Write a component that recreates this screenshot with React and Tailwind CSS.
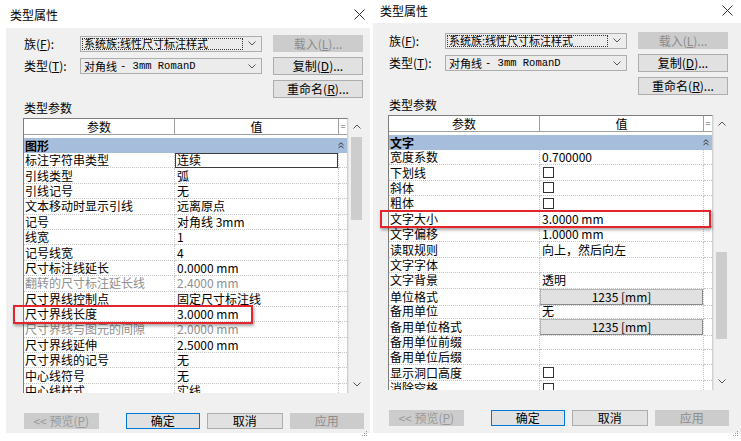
import React from 'react'
import clsx from 'clsx'

const LEFT_ROWS = [
  { name: '标注字符串类型', value: '连续', edit: true },
  { name: '引线类型', value: '弧' },
  { name: '引线记号', value: '无' },
  { name: '文本移动时显示引线', value: '远离原点' },
  { name: '记号', value: '对角线 3mm' },
  { name: '线宽', value: '1' },
  { name: '记号线宽', value: '4' },
  { name: '尺寸标注线延长', value: '0.0000 mm' },
  { name: '翻转的尺寸标注延长线', value: '2.4000 mm', muted: true },
  { name: '尺寸界线控制点', value: '固定尺寸标注线' },
  { name: '尺寸界线长度', value: '3.0000 mm' },
  { name: '尺寸界线与图元的间隙', value: '2.0000 mm', muted: true },
  { name: '尺寸界线延伸', value: '2.5000 mm' },
  { name: '尺寸界线的记号', value: '无' },
  { name: '中心线符号', value: '无' },
  { name: '中心线样式', value: '实线' },
]

const RIGHT_ROWS = [
  { name: '宽度系数', value: '0.700000' },
  { name: '下划线', check: true },
  { name: '斜体', check: true },
  { name: '粗体', check: true },
  { name: '文字大小', value: '3.0000 mm' },
  { name: '文字偏移', value: '1.0000 mm' },
  { name: '读取规则', value: '向上，然后向左' },
  { name: '文字字体', value: '' },
  { name: '文字背景', value: '透明' },
  { name: '单位格式', button: '1235 [mm]' },
  { name: '备用单位', value: '无' },
  { name: '备用单位格式', button: '1235 [mm]' },
  { name: '备用单位前缀', value: '' },
  { name: '备用单位后缀', value: '' },
  { name: '显示洞口高度', check: true },
  { name: '消除空格', check: true },
]

function Chevron({ up, className = '' }) {
  return (
    <svg width="8" height="5" viewBox="0 0 8 5" className={className}>
      <path d={up ? 'M0.5 4.5 L4 1 L7.5 4.5' : 'M0.5 0.5 L4 4 L7.5 0.5'} fill="none" stroke="#555" strokeWidth="1" />
    </svg>
  )
}

function Mn({ children }) {
  return <span className="underline underline-offset-1">{children}</span>
}

function Button({ children, disabled, primary, className = '' }) {
  return (
    <div
      className={clsx(
        'flex items-center justify-center border text-[12px] leading-none',
        disabled && 'bg-[#cccccc] border-[#cccccc] text-[#8c8c8c]',
        !disabled && 'bg-[#e1e1e1] text-black',
        primary && 'border-[#0078d7]',
        !disabled && !primary && 'border-[#adadad]',
        className
      )}
    >
      {children}
    </div>
  )
}

function Combo({ focused, children }) {
  return (
    <div className="w-[182px] h-[16px] border border-[#adadad] bg-[#ececec] flex items-center pl-[1px] pr-[5px]">
      <div
        className={clsx(
          'flex-1 h-[12px] flex items-center pl-[1px] text-[11px] leading-none whitespace-nowrap',
          focused ? 'border border-dotted border-[#333]' : 'border border-transparent'
        )}
      >
        {children}
      </div>
      <Chevron className="ml-[5px]" />
    </div>
  )
}

function Checkbox() {
  return <span className="block w-[11px] h-[11px] border border-[#333] bg-white" />
}

function Row({ row }) {
  return (
    <div className="grid grid-cols-[151px_164px_1fr] h-[15.4px] text-[12px] leading-[14px]">
      <div
        className={clsx(
          'flex items-center pl-[1px] border-r border-b border-dotted border-[#c4c4c4] whitespace-nowrap',
          row.muted ? 'text-[#8f8f8f]' : 'text-black'
        )}
      >
        {row.name}
      </div>
      <div className="relative flex items-center border-r border-b border-dotted border-[#c4c4c4]">
        {row.edit && (
          <div className="absolute inset-x-0 top-0 bottom-[-1px] border border-[#3c3c3c]" />
        )}
        {row.check && (
          <div className="pl-[3px]">
            <Checkbox />
          </div>
        )}
        {row.button && (
          <div className="h-full w-full flex items-center justify-center bg-[#e1e1e1] border border-[#b4b4b4] border-b-[#8a8a8a] border-r-[#8a8a8a]">
            {row.button}
          </div>
        )}
        {row.value !== undefined && (
          <span className={clsx('pl-[2px] whitespace-nowrap', row.muted ? 'text-[#8f8f8f]' : 'text-black')}>
            {row.value}
          </span>
        )}
      </div>
      <div className="border-b border-dotted border-[#c4c4c4]" />
    </div>
  )
}

function ParamTable({ group, rows, thumbTop, thumbHeight }) {
  return (
    <div className="flex h-[275px]">
      <div className="w-[325px] h-full border-l border-t border-[#7d7d7d] border-r-[#d0d0d0] border-r bg-white overflow-hidden">
        {/* column header */}
        <div className="grid grid-cols-[151px_164px_1fr] h-[16px] text-[12px] leading-none border-b border-[#a0a0a0]">
          <div className="flex items-center justify-center border-r border-[#a0a0a0]">参数</div>
          <div className="flex items-center justify-center border-r border-[#a0a0a0]">值</div>
          <div className="flex items-center justify-center text-[9px] text-[#555]">=</div>
        </div>
        {/* group band */}
        <div className="mt-[3px] h-[15px] bg-[#a6bedb] flex items-center justify-between pl-[1px] pr-[3px] text-[12px] font-bold leading-[14px]">
          <span>{group}</span>
          <svg width="6" height="7" viewBox="0 0 6 7">
            <path d="M0.5 3 L3 0.8 L5.5 3 M0.5 6 L3 3.8 L5.5 6" fill="none" stroke="#333" strokeWidth="1" />
          </svg>
        </div>
        {rows.map((r) => (
          <Row key={r.name} row={r} />
        ))}
      </div>
      {/* scrollbar */}
      <div className="w-[16px] h-full flex flex-col items-center bg-[#f0f0f0] border-l border-[#e4e4e4]">
        <div className="h-[17px] flex items-center justify-center">
          <Chevron up />
        </div>
        <div className="relative flex-1 w-full">
          <div
            className="absolute left-[2px] w-[11px] bg-[#cdcdcd]"
            style={{ top: thumbTop, height: thumbHeight }}
          />
        </div>
        <div className="h-[17px] flex items-center justify-center">
          <Chevron />
        </div>
      </div>
    </div>
  )
}

function TypeDialog({ titleH, bodyLeft, bodyPadLeft, bodyPadTop, bodyBottom, closeRight, titleTop, group, rows, thumbTop, thumbHeight, redBox, width }) {
  return (
    <div className="relative h-[441px] bg-white flex flex-col" style={{ width }}>
      <div className="flex items-start justify-between" style={{ height: titleH }}>
        <span className="text-[12px] leading-none pl-[10px]" style={{ marginTop: titleTop }}>类型属性</span>
        <svg width="11" height="11" viewBox="0 0 11 11" style={{ marginTop: titleTop, marginRight: closeRight }}>
          <path d="M0.5 0.5 L10.5 10.5 M10.5 0.5 L0.5 10.5" stroke="#333" strokeWidth="1" />
        </svg>
      </div>
      <div
        className="bg-[#f0f0f0] flex flex-col"
        style={{ marginLeft: bodyLeft, paddingLeft: bodyPadLeft, paddingTop: bodyPadTop, height: bodyBottom - titleH }}
      >
        <div className="w-[341px] flex flex-col text-[12px] leading-none">
          <div className="flex items-center h-[17px]">
            <span className="w-[57px] pl-[1px]">族(<Mn>F</Mn>):</span>
            <Combo focused>系统族:线性尺寸标注样式</Combo>
            <Button disabled className="ml-[11px] w-[90px] h-[17px]">载入(<Mn>L</Mn>)...</Button>
          </div>
          <div className="flex items-center h-[18px] mt-[5px]">
            <span className="w-[57px] pl-[1px]">类型(<Mn>T</Mn>):</span>
            <Combo>
              对角线 <span className="font-['Liberation_Mono',monospace] text-[10.5px] ml-[3px]">- 3mm RomanD</span>
            </Combo>
            <Button className="ml-[11px] w-[90px] h-[18px]">复制(<Mn>D</Mn>)...</Button>
          </div>
          <div className="flex items-center h-[18px] mt-[5px]">
            <Button className="ml-[250px] w-[90px] h-[18px]">重命名(<Mn>R</Mn>)...</Button>
          </div>
          <div className="h-[20px] flex items-center pl-[1px]">类型参数</div>
          <ParamTable group={group} rows={rows} thumbTop={thumbTop} thumbHeight={thumbHeight} />
          <div className="flex items-center h-[16px] mt-[20px] pl-[1px]">
            <Button disabled className="w-[75px] h-[16px] text-[#9a9a9a]">&lt;&lt; 预览(<Mn>P</Mn>)</Button>
            <Button primary className="ml-[27px] w-[75px] h-[16px]">确定</Button>
            <Button className="ml-[7px] w-[76px] h-[16px]">取消</Button>
            <Button disabled className="ml-[7px] w-[75px] h-[16px]">应用</Button>
          </div>
        </div>
      </div>
      {/* resize grip */}
      <svg width="6" height="6" viewBox="0 0 6 6" className="absolute" style={{ left: width - 8, top: bodyBottom - 2 }}>
        <rect x="4" y="0" width="1" height="1" fill="#999" />
        <rect x="2" y="2" width="1" height="1" fill="#999" />
        <rect x="4" y="2" width="1" height="1" fill="#999" />
        <rect x="0" y="4" width="1" height="1" fill="#999" />
        <rect x="2" y="4" width="1" height="1" fill="#999" />
        <rect x="4" y="4" width="1" height="1" fill="#999" />
      </svg>
      {/* highlight around the edited parameter */}
      <div
        className="absolute border-2 border-[#e3262b] shadow-[1px_2px_3px_rgba(0,0,0,0.35)]"
        style={redBox}
      />
    </div>
  )
}

export default function App() {
  return (
    <div className="w-[741px] h-[441px] flex bg-white overflow-hidden font-['Noto_Sans_CJK_SC',sans-serif] text-black">
      <TypeDialog
        width={370}
        titleH={28}
        titleTop={9}
        closeRight={5}
        bodyLeft={6}
        bodyPadLeft={17}
        bodyPadTop={7}
        bodyBottom={433}
        group="图形"
        rows={LEFT_ROWS}
        thumbTop={2}
        thumbHeight={83}
        redBox={{ left: 13, top: 305, width: 240, height: 19 }}
      />
      <TypeDialog
        width={371}
        titleH={23}
        titleTop={5}
        closeRight={8}
        bodyLeft={3}
        bodyPadLeft={15}
        bodyPadTop={9}
        bodyBottom={433}
        group="文字"
        rows={RIGHT_ROWS}
        thumbTop={120}
        thumbHeight={87}
        redBox={{ left: 10, top: 210, width: 331, height: 18 }}
      />
    </div>
  )
}
